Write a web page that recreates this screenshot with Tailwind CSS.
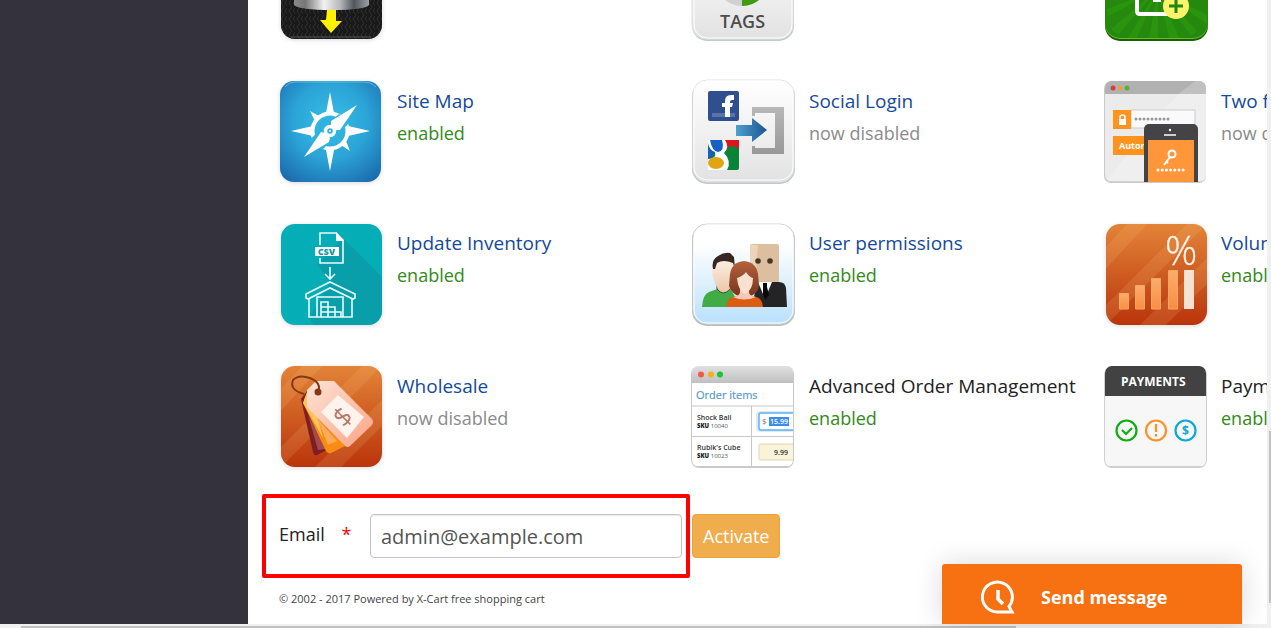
<!DOCTYPE html>
<html lang="en">
<head>
<meta charset="utf-8">
<title>Modules</title>
<script src="https://cdn.jsdelivr.net/npm/@tailwindcss/browser@4"></script>
</head>
<body class="h-screen overflow-hidden bg-white font-['Open_Sans',sans-serif] text-[#222]">
<svg class="absolute h-0 w-0" aria-hidden="true">
  <defs>
    <linearGradient id="orange" x2="0" y2="1"><stop stop-color="#e38438"/><stop offset="1" stop-color="#b9330a"/></linearGradient>
    <radialGradient id="blue" cx=".5" cy=".4" r=".75"><stop stop-color="#35bfe6"/><stop offset=".5" stop-color="#2ba3d6"/><stop offset="1" stop-color="#1a66ab"/></radialGradient>
    <linearGradient id="pale" x2="0" y2="1"><stop stop-color="#fff"/><stop offset="1" stop-color="#e2e2e2"/></linearGradient>
    <linearGradient id="sky" x2="0" y2="1"><stop offset=".2" stop-color="#fff"/><stop offset="1" stop-color="#b9e0fc"/></linearGradient>
    <linearGradient id="steel"><stop stop-color="#8a8a8a"/><stop offset=".15" stop-color="#777"/><stop offset=".4" stop-color="#f2f2f2"/><stop offset=".62" stop-color="#b5b5b7"/><stop offset=".8" stop-color="#50565c"/><stop offset="1" stop-color="#9aa0a6"/></linearGradient>
    <linearGradient id="bar" x2="0" y2="1"><stop stop-color="#e2e2e2"/><stop offset="1" stop-color="#c0c0c0"/></linearGradient>
    <linearGradient id="arrow"><stop stop-color="#4da0cf"/><stop offset="1" stop-color="#1b558f"/></linearGradient>
    <linearGradient id="peach" x2="1" y2="1"><stop stop-color="#fde3d6"/><stop offset="1" stop-color="#fba387"/></linearGradient>
    <linearGradient id="amber" x2="0" y2="1"><stop stop-color="#f9ae6c"/><stop offset="1" stop-color="#f98d42"/></linearGradient>
    <linearGradient id="grey" x2="0" y2="1"><stop stop-color="#b8b8b8"/><stop offset="1" stop-color="#989898"/></linearGradient>
    <linearGradient id="hair" x2="0" y2="1"><stop stop-color="#b3623d"/><stop offset="1" stop-color="#7a351c"/></linearGradient>
    <linearGradient id="skin" x2="0" y2="1"><stop stop-color="#fff3e8"/><stop offset="1" stop-color="#ecc8aa"/></linearGradient>
    <pattern id="zig" width="8" height="8" patternUnits="userSpaceOnUse"><path d="M2 0l3 4-3 4M6 0l3 4-3 4" fill="none" stroke="#303030" stroke-width="1"/></pattern>
    <clipPath id="tile"><rect x="2" y="1" width="101" height="101" rx="14"/></clipPath>
    <clipPath id="card"><rect x="2" y="1" width="101" height="101" rx="7"/></clipPath>
  </defs>
</svg>
<div class="flex h-full flex-col">
  <div class="relative flex min-h-0 flex-1">
    <aside class="w-[248px] shrink-0 bg-[#34323d]"></aside>
    <main class="min-w-0 flex-1 overflow-hidden">
      <section class="-mt-[61px] ml-[31px] grid grid-cols-[repeat(3,412px)] gap-y-[38px] text-[18px] leading-8">
        <div class="h-[104px]">
          <svg class="size-[104px] overflow-visible drop-shadow-sm" viewBox="0 0 104 104">
            <rect x="2" y="0" width="101" height="100" rx="14" fill="#191919"/><rect x="2" y="0" width="101" height="100" rx="14" fill="url(#zig)"/>
            <path d="M12 98h80" stroke="#555"/>
            <path d="M15 20h75v46q-4 5-37 5t-38-5z" fill="url(#steel)"/>
            <path d="M48 71h9v11h6L52 94 41 81h6z" fill="#fff200"/>
          </svg>
        </div>
        <div class="h-[104px]">
          <svg class="size-[104px] overflow-visible" viewBox="0 0 104 104">
            <rect x="1" y="1" width="102" height="101" rx="15" fill="#c5cbcd"/><rect x="1" y="0" width="101" height="100" rx="14" fill="url(#pale)" stroke="#dcdfe0"/><rect x="3" y="1" width="98" height="98" rx="13" fill="none" stroke="#fff"/>
            <circle cx="51" cy="40" r="27" fill="#d0d0d0"/><path d="M51 40v27a27 27 0 0 0 27-27z" fill="#3f9c0c"/>
            <text x="29" y="89" font-size="18" font-weight="600" fill="#4c4c4c">TAGS</text>
          </svg>
        </div>
        <div class="h-[104px]">
          <svg class="size-[104px] overflow-visible" viewBox="0 0 104 104">
            <rect x="2" y="2" width="103" height="100" rx="15" fill="#175e0d"/><rect x="2" y="1" width="103" height="99" rx="15" fill="#6cba1d"/><rect x="2" y="0" width="103" height="99" rx="15" fill="#24890c"/>
            <path d="M55 50L4 70v8zM55 50L8 90l7 6zM55 50L25 99h9zM55 50L46 99h9zM55 50L66 99h10zM55 50L88 97l6-5zM55 50l49 26v9z" fill="#2a940f"/>
            <path d="M34 50v22q0 3 3 3h30M50 61h8" fill="none" stroke="#fff" stroke-width="4"/>
            <circle cx="73" cy="67" r="13" fill="#fff36b"/><path d="M66 67h14M73 60v14" stroke="#23860e" stroke-width="3"/>
          </svg>
        </div>

        <div class="flex gap-[14px]">
          <svg class="size-[104px] shrink-0 overflow-visible drop-shadow-sm" viewBox="0 0 104 104">
            <rect x="1" y="0" width="101" height="101" rx="14" fill="url(#blue)"/><path d="M6 6Q10 1 16 1h70q6 0 11 5" fill="none" stroke="#7ccbe6" opacity=".7"/>
            <g fill="#fff"><path d="M51 11l4 21h-8zM51 90l-4-21h8zM12 50l22-5v10zM91 50l-22-5v10zM31 30l9 5-4 5zM71 70l-4-10-5 4z"/>
            <circle cx="51" cy="50" r="17.5" fill="none" stroke="#fff" stroke-width="4"/></g>
            <path d="M60 33l12 7-29 29-14-9z" fill="#2fb2df"/><circle cx="51" cy="50" r="14" fill="#2fb2df"/>
            <path d="M78 24L61 49l-4 0-5-5 0-4zM25 76l17-25 4 1 5 5-1 4z" fill="#fff"/><circle cx="51" cy="50" r="4.500" fill="#2fb2df" stroke="#fff" stroke-width="3.500"/><circle cx="51" cy="50" r="1" fill="#fff"/>
          </svg>
          <div class="pt-1"><a href="#" class="block whitespace-nowrap text-[19px] text-[#154a9a]">Site Map</a><p class="text-[#338a1a]">enabled</p></div>
        </div>
        <div class="flex gap-[14px]">
          <svg class="size-[104px] shrink-0 overflow-visible" viewBox="0 0 104 104">
            <rect x="1" y="0" width="103" height="103" rx="15" fill="#c3c8ca"/><rect x="2" y="-1" width="101" height="102" rx="14" fill="url(#pale)" stroke="#dfe2e3"/><rect x="3" y="0" width="99" height="99" rx="13" fill="none" stroke="#fff"/>
            <rect x="17" y="10" width="31" height="30" rx="2" fill="#304f8f"/><path d="M21 32h23v4H21z" fill="#5a74aa"/><path d="M34 36V26h-3v-4h3v-2q0-6 6-6h3v5h-2q-2 0-2 2v1h3l-1 4h-2v10z" fill="#fff"/>
            <rect x="17" y="59" width="31" height="30" rx="2" fill="#078435"/><path d="M33 59h15v9q-8-6-12 0z" fill="#d8171d"/><path d="M17 61l7 12-7 6z" fill="#1a58b8"/>
            <path d="M17 78q9 0 7-7-6-2-7-9v-3h17q5 7-1 13 8 8 3 17H17z" fill="#fff"/><path d="M19 59h12q3 11-4 12-6-1-8-12zM17 66l6 8-6 3z" fill="#1460c4"/><ellipse cx="25" cy="82" rx="8" ry="6" fill="#e2a512"/>
            <path d="M61 26h32v47H61v-8h3v2h20V32H64v3h-3z" fill="url(#grey)"/>
            <path d="M45 44h16v-7l15 12-15 12v-6H45z" fill="url(#arrow)"/>
          </svg>
          <div class="pt-1"><a href="#" class="block whitespace-nowrap text-[19px] text-[#154a9a]">Social Login</a><p class="text-[#8b8b8b]">now disabled</p></div>
        </div>
        <div class="flex gap-[14px]">
          <svg class="size-[104px] shrink-0 overflow-visible" viewBox="0 0 104 104">
            <g transform="translate(0 -1)"><rect x="1" y="1" width="102" height="102" rx="7" fill="#c9c9c9"/><g clip-path="url(#card)">
            <path d="M0 0h104v101H0z" fill="#ebebeb"/><path d="M0 0h104v14H0z" fill="#b1b1b1"/><path d="M75 14L94 0h10v104H0z" fill="#fff" opacity=".2"/>
            <circle cx="10" cy="8" r="2.5" fill="#d93c44"/><circle cx="17" cy="8" r="2.5" fill="#e5a343"/><circle cx="24" cy="8" r="2.5" fill="#60ad3c"/>
            <rect x="28" y="30" width="64" height="18" fill="#fafafa" stroke="#ccc"/><path d="M10 30h18v19H10zM10 56h32v19H10z" fill="#ff931e"/>
            <rect x="16" y="39" width="7" height="6" fill="#fff"/><path d="M17 39v-2q0-2 2.500-2t2.500 2v2" fill="none" stroke="#fff" stroke-width="1.500"/>
            <path d="M33 39h33" stroke="#999" stroke-width="3" stroke-linecap="round" stroke-dasharray="0 4"/>
            <text x="16" y="69" font-size="9" font-weight="700" fill="#fff">Autor</text>
            <rect x="41" y="44" width="54" height="70" rx="5" fill="#444346"/><path d="M45 60h46v44H45z" fill="#ff973a"/><path d="M61 55h12" stroke="#fff" stroke-width="1.500"/><circle cx="67" cy="50" r="1.200" fill="#fff"/>
            <circle cx="69" cy="74" r="3.500" fill="none" stroke="#fff" stroke-width="2"/><path d="M67 77l-6 8M63 81l2 2" stroke="#fff" stroke-width="2"/><path d="M55 90h26" stroke="#fff" stroke-width="3" stroke-linecap="round" stroke-dasharray="0 4.200"/></g></g>
          </svg>
          <div class="pt-1"><a href="#" class="block whitespace-nowrap text-[19px] text-[#154a9a]">Two factor authentication</a><p class="whitespace-nowrap text-[#8b8b8b]">now disabled</p></div>
        </div>

        <div class="flex gap-[14px]">
          <svg class="size-[104px] shrink-0 overflow-visible drop-shadow-sm" viewBox="0 0 104 104">
            <g clip-path="url(#tile)"><path d="M0 0h104v104H0z" fill="#05adb6"/><path d="M64 15l40 40v49H36L30 95 51 60 38 41z" fill="#0a9ba5" opacity=".75"/></g>
            <g fill="none" stroke="#e9fbfc" stroke-width="1.600"><path d="M41 22V10h16l7 7v23H41v-5M30 75v19h43V75M38 94V74h26v20M42 94V79h7v5h7v5h6v5M42 84h7v5h7M42 89h7v5M56 89v5"/><path d="M51 59l25 12v4l-2 1-23-11-22 11-2-1v-4zM51 44v12M46 51l5 5 5-5"/></g>
            <path d="M57 9v9h8z" fill="#fff"/><rect x="36" y="24" width="24" height="9" fill="#fff"/><text x="39" y="32" font-size="9" font-weight="800" fill="#0d9ca6">CSV</text>
          </svg>
          <div class="pt-1"><a href="#" class="block whitespace-nowrap text-[19px] text-[#154a9a]">Update Inventory</a><p class="text-[#338a1a]">enabled</p></div>
        </div>
        <div class="flex gap-[14px]">
          <svg class="size-[104px] shrink-0 overflow-visible" viewBox="0 0 104 104">
            <rect x="1" y="1" width="103" height="102" rx="15" fill="#b9bcbf"/><rect x="2" y="1" width="101" height="100" rx="14" fill="url(#sky)" stroke="#d4d4d4"/><rect x="3" y="2" width="99" height="98" rx="13" fill="none" stroke="#fff"/>
            <path d="M59 22l2-1h26l1 2v38H59z" fill="#dcbf9f"/><path d="M59 22h8l-3 37h-5z" fill="#ebd4ba"/><circle cx="67" cy="38" r="2.800" fill="#4a3426"/><circle cx="79" cy="38" r="2.800" fill="#4a3426"/>
            <path d="M61 84l5-25h22q6 0 7 6l1 19z" fill="#242427"/><path d="M67 59h14l-7 17z" fill="#fff"/><path d="M72 60h4v4l2 8-4 5-2-5z" fill="#09090b"/>
            <path d="M11 84q1-13 7-15l11-4h10l11 19z" fill="#43ab45"/><path d="M26 66q6 8 13 0v-8H26z" fill="#e4bd9c" stroke="#39484d"/>
            <path d="M22 45q0-12 11-12t11 12v9q-2 13-11 15-8-2-10-13-3-5-1-11z" fill="url(#skin)"/><path d="M22 46q-2-9 5-13 6-4 12-3l4 4 1 12-2-6q-10-4-16 0l-2 6z" fill="#382720"/>
            <path d="M53 38q-12 1-14 13l-1 12q3 8 10 10h12q8-4 8-11l-1-11q-2-12-14-13z" fill="url(#hair)"/>
            <path d="M35 84q1-9 7-10l7-2v-6h8v6l8 2q6 1 7 10z" fill="#dc5d12"/><path d="M42 74q7-1 7-5v-4h9v4q0 4 7 5-12 5-23 0z" fill="#f6cbb5"/><path d="M46 55q6-2 9-6 3 5 7 6 0 12-8 16-7-4-8-16z" fill="#fae0d0"/>
          </svg>
          <div class="pt-1"><a href="#" class="block whitespace-nowrap text-[19px] text-[#154a9a]">User permissions</a><p class="text-[#338a1a]">enabled</p></div>
        </div>
        <div class="flex gap-[14px]">
          <svg class="size-[104px] shrink-0 overflow-visible drop-shadow-sm" viewBox="0 0 104 104">
            <g transform="translate(1 0)"><g clip-path="url(#tile)"><path d="M0 0h104v104H0z" fill="url(#orange)"/><path d="M24 0h20L0 48V26zM84 0h20L0 104V84zM104 34v26l-44 44H34z" fill="#ffd08a" opacity=".14"/></g></g>
            <text x="62" y="42" font-size="40" font-weight="300" fill="#fff4e9" stroke="#fff4e9" stroke-width=".3">%</text>
            <g fill="url(#amber)" stroke="#f4a667"><path d="M16.500 70.500h9V86h-9z"/><path d="M32.500 62.500h9V86h-9z"/><path d="M48.500 55.500h9V86h-9z"/><path d="M65.500 47.500h9V86h-9z"/></g><path d="M81 47h10v39H81z" fill="#f7e2d2"/>
          </svg>
          <div class="pt-1"><a href="#" class="block whitespace-nowrap text-[19px] text-[#154a9a]">Volume discounts</a><p class="text-[#338a1a]">enabled</p></div>
        </div>

        <div class="flex gap-[14px]">
          <svg class="size-[104px] shrink-0 overflow-visible drop-shadow-sm" viewBox="0 0 104 104">
            <g clip-path="url(#tile)"><path d="M0 0h104v104H0z" fill="url(#orange)"/><path d="M24 0h20L0 48V26zM84 0h20L0 104V84zM104 34v26l-44 44H34z" fill="#ffd08a" opacity=".14"/></g>
            <path d="M22 34l6-8 30 54-20 10q-3 1-4-3z" fill="#7c1f24"/><path d="M29 50l18 34-8 1z" fill="#a34a4a"/>
            <path d="M24 38l4-11 38 54-14 7q-3 1-5-2z" fill="#fb8c12"/><path d="M24 38l4-11 8 16 8 30z" fill="#fdc45a"/><path d="M38 53l20 23-9 4z" fill="#fdab5b"/>
            <path d="M28 25l8-8 3-1h16l38 38q2 3 0 6L71 81q-2 2-5 0L28 42z" fill="url(#peach)"/><path d="M59 30l26 22-17 21-26-26z" fill="#fff3ed"/>
            <text transform="translate(64 52) rotate(-45)" y="9" text-anchor="middle" font-size="26" fill="#b97966">$</text>
            <circle cx="39" cy="27" r="3.500" fill="#843b13"/><path d="M39 27q4-9-8-14-11-4-17 2-4 10 11 14" fill="none" stroke="#853914" stroke-width="2"/>
          </svg>
          <div class="pt-[5px]"><a href="#" class="block whitespace-nowrap text-[19px] text-[#154a9a]">Wholesale</a><p class="text-[#8b8b8b]">now disabled</p></div>
        </div>
        <div class="flex gap-[14px]">
          <svg class="size-[104px] shrink-0 overflow-visible" viewBox="0 0 104 104">
            <g transform="translate(-1 0)"><rect x="1" y="1" width="103" height="102" rx="8" fill="#c9c9c9"/><g clip-path="url(#card)">
            <path d="M0 0h104v101H0z" fill="#fff"/><path d="M0 0h104v18H0z" fill="url(#bar)"/><path d="M0 41h104M0 71.500h104M61.500 41v61" stroke="#c8c8c8" fill="none"/>
            <circle cx="11" cy="9.500" r="3" fill="#f7564b"/><circle cx="21" cy="9.500" r="3" fill="#f9b016"/><circle cx="30" cy="9.500" r="3" fill="#16c735"/>
            <text x="6" y="34" font-size="11" fill="#5a9ac6" stroke="#5a9ac6" stroke-width=".2">Order items</text>
            <g font-size="7" font-weight="600" fill="#333"><text x="7" y="55">Shock Ball</text><text x="7" y="85">Rubik's Cube</text></g>
            <g font-size="6" fill="#555"><text x="7" y="63"><tspan font-weight="800" fill="#222">SKU</tspan> 10040</text><text x="7" y="93"><tspan font-weight="800" fill="#222">SKU</tspan> 10023</text></g>
            <rect x="68" y="48" width="40" height="17" rx="2" fill="#fff" stroke="#d6ebfb" stroke-width="4"/><rect x="69" y="48" width="40" height="17" rx="2" fill="#fff" stroke="#64b0ec" stroke-width="1.500"/><text x="72" y="59" font-size="8" fill="#777">$</text><rect x="79" y="52" width="20" height="9" fill="#3c8cf0"/><text x="80" y="59" font-size="7" font-weight="600" fill="#fff">15.99</text>
            <rect x="69" y="79" width="40" height="16" rx="1" fill="#f8f3d9" stroke="#ded7b2"/><text x="84" y="90" font-size="7" font-weight="600" fill="#333">9.99</text></g></g>
          </svg>
          <div class="pt-[5px]"><p class="whitespace-nowrap text-[19px]">Advanced Order Management</p><p class="text-[#338a1a]">enabled</p></div>
        </div>
        <div class="flex gap-[14px]">
          <svg class="size-[104px] shrink-0 overflow-visible" viewBox="0 0 104 104">
            <rect x="1" y="2" width="103" height="101" rx="8" fill="#cfcfcf"/><g clip-path="url(#card)"><path d="M0 0h104v101H0z" fill="#f7f7f7"/><path d="M0 0h104v31H0z" fill="#424242"/></g>
            <text x="18" y="21" font-size="12" font-weight="700" fill="#fff">PAYMENTS</text>
            <g fill="none" stroke-width="2.200"><g stroke="#10ad10"><circle cx="23.500" cy="65.500" r="10"/><path d="M19 65l4 4 6-6"/></g><g stroke="#ff9128"><circle cx="53" cy="65.500" r="10"/><path d="M53 59v8M53 69v2.500"/></g><circle cx="82.500" cy="65.500" r="10" stroke="#0ca8dc"/></g>
            <text x="79" y="70" font-size="12" font-weight="700" fill="#0ca8dc">$</text>
          </svg>
          <div class="pt-[5px]"><p class="whitespace-nowrap text-[19px]">Payment transactions</p><p class="text-[#338a1a]">enabled</p></div>
        </div>
      </section>

      <form class="mt-[25px] ml-[14px] flex items-center gap-[2px]">
        <div class="flex w-[428px] items-center rounded-xs border-4 border-[#fe0000] py-4 pr-1 pl-[13px]">
          <label for="email" class="w-[91px] shrink-0 pb-1 text-[18px]">Email <span class="ml-3 text-[#fe0000]">*</span></label>
          <input id="email" type="email" value="admin@example.com" class="h-11 min-w-0 flex-1 rounded border border-[#c4c4c4] px-[10px] text-[20px] text-[#555] shadow-[inset_0_1px_1px_rgba(0,0,0,0.08)]">
        </div>
        <button type="button" class="h-11 rounded border border-[#eea236] bg-[#f0ad4e] px-[10px] text-[18px] text-white">Activate</button>
      </form>
      <footer class="mt-3 ml-[31px] text-[11px] leading-[18px] text-[#444]">© 2002 - 2017 Powered by X-Cart free shopping cart</footer>
    </main>
    <div class="flex w-1 shrink-0 flex-col items-end bg-[#f0f0f0]"><div class="mt-[431px] h-[172px] w-0.5 bg-[#c1c1c1]"></div></div>
    <button type="button" class="absolute right-[29px] bottom-0 flex h-[60px] w-[300px] items-center gap-[25px] rounded-t-[3px] bg-[#f77011] pt-1.5 pl-[39px] text-[18px] font-bold text-white shadow-[0_0_28px_rgba(0,0,0,0.15)]">
      <svg class="size-[35px]" viewBox="0 0 35 35" fill="none" stroke="#fff" stroke-width="3"><path d="M17.500 32H31l-3-5.500A15 15 0 1 0 17.500 32z"/><path d="M17 10v9l5 5" stroke-width="3.500"/></svg>
      Send message
    </button>
  </div>
  <div class="flex h-1 shrink-0 items-end bg-[#f0f0f0] pr-[255px] pl-[21px]"><div class="h-0.5 w-full bg-[#c1c1c1]"></div></div>
</div>
</body>
</html>
